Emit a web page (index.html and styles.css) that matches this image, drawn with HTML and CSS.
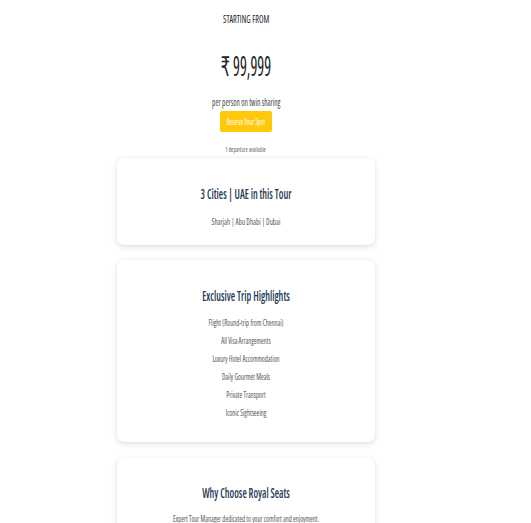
FILE: index.html
```html
<!DOCTYPE html>
<html>
<head>
<meta charset="utf-8">
<link rel="stylesheet" href="styles.css">
</head>
<body>
<div class="page">
  <section class="hero">
    <div class="eyebrow sq">STARTING FROM</div>
    <div class="price">₹ 99,999</div>
    <div class="note sq">per person on twin sharing</div>
    <a class="btn"><span class="btn-label">Reserve Your Spot</span></a>
    <div class="avail sq">1 departure available</div>
  </section>
  <section class="card c1">
    <h2 class="sq">3 Cities | UAE in this Tour</h2>
    <p class="sub sq">Sharjah | Abu Dhabi | Dubai</p>
  </section>
  <section class="card c2">
    <h2 class="sq">Exclusive Trip Highlights</h2>
    <ul class="list sq">
      <li>Flight (Round-trip from Chennai)</li>
      <li>All Visa Arrangements</li>
      <li>Luxury Hotel Accommodation</li>
      <li>Daily Gourmet Meals</li>
      <li>Private Transport</li>
      <li>Iconic Sightseeing</li>
    </ul>
  </section>
  <section class="card c3">
    <h2 class="sq">Why Choose Royal Seats</h2>
    <p class="sub sq">Expert Tour Manager dedicated to your comfort and enjoyment.</p>
  </section>
</div>
</body>
</html>
```
FILE: styles.css
```css
html, body { margin: 0; padding: 0; background: #fff; }
body { font-family: "Open Sans", "DejaVu Sans Condensed", sans-serif; font-stretch: 75%; color: #333; }
.page { width: 492px; height: 523px; overflow: hidden; display: flex; flex-direction: column; align-items: center; }
.sq { transform: scaleX(0.74); white-space: nowrap; }
.hero { display: flex; flex-direction: column; align-items: center; padding-top: 12px; }
.eyebrow { font-size: 11px; line-height: 14px; color: #222; }
.price { font-size: 27px; line-height: 30px; margin-top: 25px; color: #222; transform: scaleX(0.6); white-space: nowrap; }
.note { font-size: 10px; line-height: 12px; margin-top: 15px; color: #444; }
.btn { display: flex; align-items: center; justify-content: center; margin-top: 3px; background: #ffc80a; color: #fff; width: 52px; height: 21px; border-radius: 2px; }
.btn-label { display: inline-block; font-size: 8px; white-space: nowrap; transform: scaleX(0.78); }
.avail { font-size: 7.5px; line-height: 10px; margin-top: 12px; color: #666; }
.card { flex: none; width: 258px; box-sizing: border-box; background: #fff; border-radius: 7px; box-shadow: 0 2px 6px rgba(0,0,0,0.12), 0 0 2px rgba(0,0,0,0.05); display: flex; flex-direction: column; align-items: stretch; text-align: center; }
h2 { margin: 0; font-weight: 600; font-size: 13.5px; line-height: 16px; color: #1d3954; }
.sub { margin: 0; font-size: 9.5px; line-height: 12px; color: #555; }
.c1 { margin-top: 4px; height: 87px; padding-top: 28px; }
.c1 .sub { margin-top: 14px; }
.c2 { margin-top: 15px; height: 182px; padding-top: 28px; }
.list { list-style: none; margin: 10px 0 0; padding: 0; font-size: 9px; line-height: 18px; color: #555; }
.c3 { margin-top: 16px; height: 90px; padding-top: 27px; }
.c3 .sub { margin-top: 12px; font-size: 9px; }
```
